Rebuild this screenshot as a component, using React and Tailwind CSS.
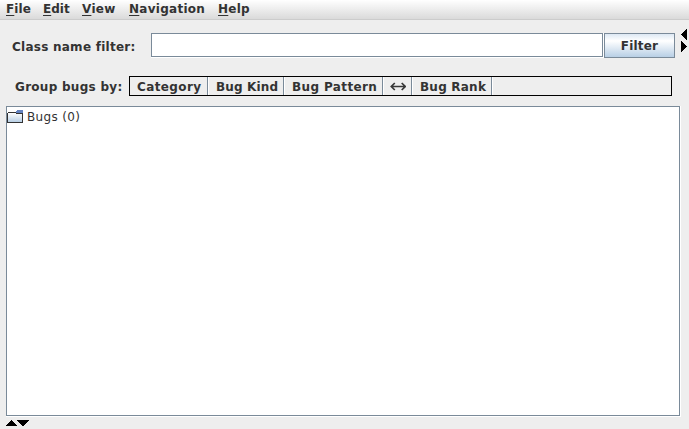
const menus = [
  { label: "File", cls: "w-[37px] tracking-[0.1px]" },
  { label: "Edit", cls: "w-[39px] tracking-[0px]" },
  { label: "View", cls: "w-[47px] tracking-[0.3px]" },
  { label: "Navigation", cls: "w-[89px] tracking-[0.27px]" },
  { label: "Help", cls: "w-[40px] tracking-[0.25px]" },
];

const groups = [
  { label: "Category", cls: "w-[78px] tracking-[0.38px]" },
  { label: "Bug Kind", cls: "w-[76px] tracking-[0.15px]" },
  { label: "Bug Pattern", cls: "w-[99px] tracking-[0.38px]" },
  { label: "↔", cls: "w-[29px]" },
  { label: "Bug Rank", cls: "w-[80px] tracking-[0.22px]" },
];

function MenuBar() {
  return (
    <nav className="flex h-5 shrink-0 border-b border-[#cccccc] bg-linear-to-b from-white to-[#dadada] pl-1.5">
      {menus.map(({ label, cls }) => (
        <div key={label} className={`${cls} shrink-0 leading-[19px]`}>
          <span className="underline decoration-1 underline-offset-2">{label[0]}</span>
          {label.slice(1)}
        </div>
      ))}
    </nav>
  );
}

function SwapIcon() {
  return (
    <svg className="-ml-px mt-[5px] block" width="16" height="9" viewBox="0 0 16 9" fill="none" stroke="#383838" strokeWidth="1.7">
      <path d="M1.5 4.5H15M4.8 1L1.3 4.5L4.8 8M11.7 1L15.2 4.5L11.7 8" />
    </svg>
  );
}

function FolderIcon() {
  return (
    <svg className="mt-[3px] block shrink-0" width="16" height="13" viewBox="0 0 16 13" shapeRendering="crispEdges">
      <defs>
        <linearGradient id="folder" x1="0" y1="0" x2="0" y2="1">
          <stop offset="0" stopColor="#ffffff" />
          <stop offset="1" stopColor="#b8cfe5" />
        </linearGradient>
      </defs>
      <rect x="1" y="3" width="14" height="9" fill="url(#folder)" />
      <path d="M10 0h6v3h-7v-2h1z" fill="#6382bf" />
      <path d="M1 2h8v1h-8zM9 3h6v1h-6zM0 3h1v9h-1zM0 12h16v1h-16zM15 3h1v9h-1z" fill="#333333" />
    </svg>
  );
}

export default function App() {
  return (
    <div className="flex h-[429px] w-[689px] flex-col overflow-hidden bg-[#eeeeee] font-['DejaVu_Sans',sans-serif] text-[12px] font-bold whitespace-nowrap text-[#333333]">
      <MenuBar />
      <div className="flex h-14 shrink-0 pt-[13px]">
        <label htmlFor="filter" className="w-[151px] pl-3 leading-[28px] tracking-[0.25px]">Class name filter:</label>
        <div className="h-[25px] w-[453px] border-r border-b border-white">
          <input id="filter" className="block h-6 w-[452px] border border-[#7a8a99] bg-white px-1 outline-none" />
        </div>
        <button className="h-[25px] w-[71px] border border-[#7a8a99] bg-linear-to-b from-[#dde8f3] via-white via-30% to-[#b8cfe5] leading-[24px] tracking-[0.2px]">Filter</button>
        <svg className="-mt-1 ml-[6px] block" width="6" height="24" viewBox="0 0 6 24" shapeRendering="crispEdges">
          <path d="M6 -0.5v12.2L-0.2 5.5zM0 11.5v12.2l6.2-6.2z" fill="black" />
        </svg>
      </div>
      <div className="flex h-[30px] shrink-0">
        <span className="w-[129px] pl-[15px] leading-[22px] tracking-[0.28px]">Group bugs by:</span>
        <div className="flex h-5 w-[543px] border border-black">
          {groups.map(({ label, cls }, i) => (
            <div key={label} className={`${cls} shrink-0 border-r border-[#7a8a99] ${i ? "pl-2 shadow-[inset_1px_0_0_white]" : "pl-[7px]"} leading-[20px]`}>
              {label === "↔" ? <SwapIcon /> : label}
            </div>
          ))}
          <div className="w-px bg-white" />
        </div>
      </div>
      <div className="ml-1.5 h-[311px] w-[675px] shrink-0 border-r border-b border-white">
        <div className="flex h-[310px] w-[674px] border border-[#7a8a99] bg-white font-normal">
          <FolderIcon />
          <span className="pl-1 leading-[20px] tracking-[0.34px]">Bugs (0)</span>
        </div>
      </div>
      <svg className="mt-[3px] ml-1.5 block shrink-0" width="24" height="6" viewBox="0 0 24 6" shapeRendering="crispEdges">
        <path d="M-0.5 6h12.2L5.5 -0.2zM10.7 0h12.8l-6.4 6.3z" fill="black" />
      </svg>
    </div>
  );
}
